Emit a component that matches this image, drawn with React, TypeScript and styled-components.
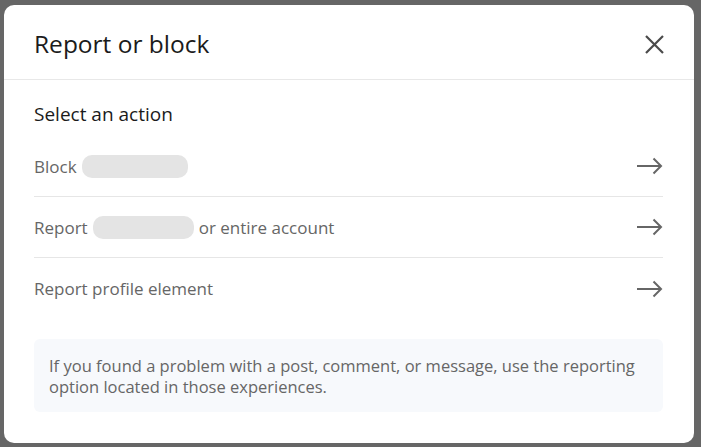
import React from "react";
import styled, { createGlobalStyle } from "styled-components";

const Global = createGlobalStyle`
  html, body { margin: 0; padding: 0; }
  body {
    background: #666666;
    font-family: "Open Sans", "Noto Sans", sans-serif;
    -webkit-font-smoothing: antialiased;
  }
`;

const Overlay = styled.div`
  width: 701px;
  height: 447px;
  box-sizing: border-box;
  padding: 5px 7px 4px 4px;
  display: flex;
`;

const Modal = styled.div`
  flex: 1;
  background: #ffffff;
  border-radius: 10px;
  display: flex;
  flex-direction: column;
  overflow: hidden;
`;

const Header = styled.header`
  height: 75px;
  box-sizing: border-box;
  border-bottom: 1px solid #e8e8e8;
  display: flex;
  align-items: center;
  justify-content: space-between;
  padding: 0 30px 0 30px;
`;

const Title = styled.h2`
  margin: 0;
  font-size: 24.5px;
  font-weight: 400;
  color: #1b1b1b;
  line-height: 30px;
  padding-top: 3px;
`;

const CloseButton = styled.button`
  border: 0;
  background: transparent;
  padding: 0;
  width: 19px;
  height: 19px;
  display: flex;
  align-items: center;
  justify-content: center;
  margin-top: 4px;
  cursor: pointer;
`;

const Body = styled.div`
  padding: 22px 31px 0 30px;
  display: flex;
  flex-direction: column;
`;

const SectionTitle = styled.h3`
  margin: 0 0 10px 0;
  font-size: 19px;
  font-weight: 400;
  color: #1b1b1b;
  line-height: 24px;
`;

const List = styled.ul`
  list-style: none;
  margin: 0;
  padding: 0;
`;

const Row = styled.li<{ $last?: boolean }>`
  height: 61px;
  display: flex;
  align-items: center;
  justify-content: space-between;
  border-bottom: ${(p) => (p.$last ? "none" : "1px solid #e6e6e6")};
  color: #666666;
  font-size: 17px;
  cursor: pointer;
  padding-top: 0;
  box-sizing: border-box;
`;

const Label = styled.span`
  display: flex;
  align-items: center;
  gap: 5px;
  white-space: nowrap;
`;

const Redacted = styled.span<{ $w: number }>`
  display: inline-block;
  width: ${(p) => p.$w}px;
  height: 23px;
  border-radius: 10px;
  background: #e4e4e4;
`;

const Info = styled.div`
  margin-top: 20px;
  background: #f7f9fc;
  border-radius: 6px;
  padding: 16px 15px 15px 15px;
  color: #666666;
  font-size: 16.5px;
  line-height: 21px;
`;

const Arrow = () => (
  <svg width="27" height="18" viewBox="0 0 27 18" fill="none">
    <path d="M1 9H25" stroke="#666" strokeWidth="2" />
    <path d="M17.5 1.5L25 9L17.5 16.5" stroke="#666" strokeWidth="2" strokeLinejoin="miter" />
  </svg>
);

const CloseIcon = () => (
  <svg width="19" height="19" viewBox="0 0 19 19" fill="none">
    <path d="M1 1L18 18M18 1L1 18" stroke="#4a4a4a" strokeWidth="2.2" />
  </svg>
);

export default function App() {
  return (
    <>
      <Global />
      <Overlay>
        <Modal>
          <Header>
            <Title>Report or block</Title>
            <CloseButton aria-label="Dismiss">
              <CloseIcon />
            </CloseButton>
          </Header>
          <Body>
            <SectionTitle>Select an action</SectionTitle>
            <List>
              <Row>
                <Label>
                  Block <Redacted $w={106} />
                </Label>
                <Arrow />
              </Row>
              <Row>
                <Label>
                  Report <Redacted $w={101} /> or entire account
                </Label>
                <Arrow />
              </Row>
              <Row $last>
                <Label>Report profile element</Label>
                <Arrow />
              </Row>
            </List>
            <Info>
              If you found a problem with a post, comment, or message, use the reporting option
              located in those experiences.
            </Info>
          </Body>
        </Modal>
      </Overlay>
    </>
  );
}
